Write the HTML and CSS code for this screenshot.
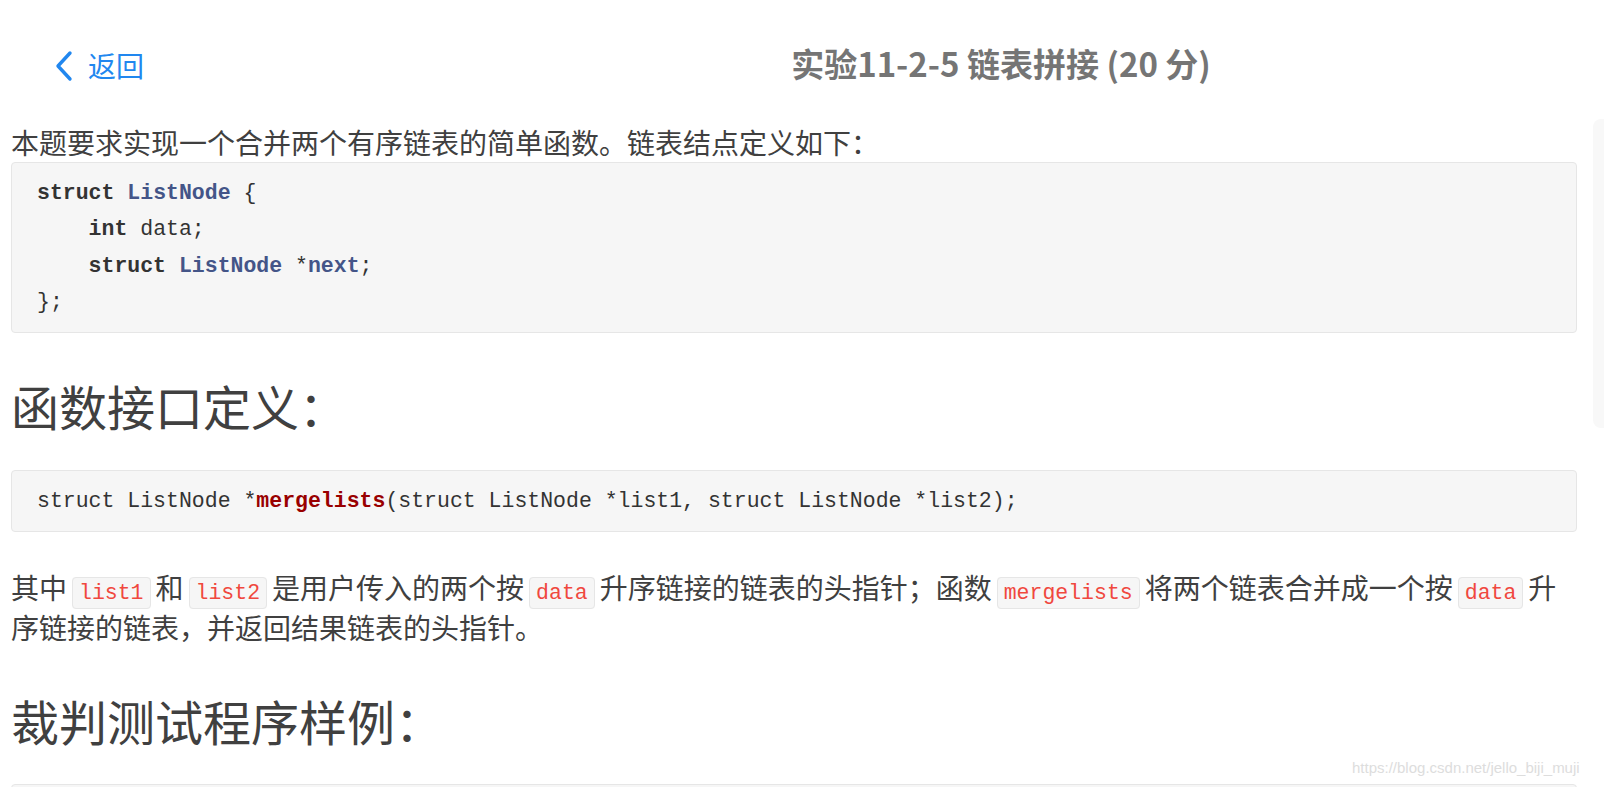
FILE: index.html
```html
<!DOCTYPE html>
<html lang="zh-CN">
<head>
<meta charset="utf-8">
<title>实验11-2-5 链表拼接 (20 分)</title>
<link rel="stylesheet" href="styles.css">
</head>
<body>
<header class="topbar">
  <a class="back" href="#">
    <svg class="chev" width="20" height="32" viewBox="0 0 20 32" aria-hidden="true">
      <polyline points="16,3 4,16 16,29" fill="none" stroke="#2187ef" stroke-width="3.4" stroke-linecap="round" stroke-linejoin="round"/>
    </svg>
    <span>返回</span>
  </a>
  <h1 class="title">实验11-2-5 链表拼接 (20 分)</h1>
</header>

<main class="content">
  <p class="lead">本题要求实现一个合并两个有序链表的简单函数。链表结点定义如下：</p>
  <pre class="code"><code><span class="kw">struct</span> <span class="ty">ListNode</span> {
    <span class="kw">int</span> data;
    <span class="kw">struct</span> <span class="ty">ListNode</span> *<span class="ty">next</span>;
};</code></pre>

  <h2 class="sec sec-first">函数接口定义：</h2>
  <pre class="code"><code>struct ListNode *<span class="fn">mergelists</span>(struct ListNode *list1, struct ListNode *list2);</code></pre>

  <p class="text">其中<code class="ic">list1</code>和<code class="ic">list2</code>是用户传入的两个按<code class="ic">data</code>升序链接的链表的头指针；函数<code class="ic">mergelists</code>将两个链表合并成一个按<code class="ic">data</code>升序链接的链表，并返回结果链表的头指针。</p>

  <h2 class="sec sec-second">裁判测试程序样例：</h2>
  <pre class="code code-cut"><code>#include &lt;stdio.h&gt;</code></pre>
</main>

<div class="scroll-thumb"></div>
<div class="watermark">https://blog.csdn.net/jello_biji_muji</div>
</body>
</html>
```

FILE: styles.css
```css
html, body {
  margin: 0;
  padding: 0;
  background: #ffffff;
  height: 787px;
  overflow: hidden;
}

body {
  font-family: "Noto Sans CJK SC", "Noto Sans", sans-serif;
  color: #404040;
  position: relative;
}

.topbar {
  display: flex;
  align-items: center;
  height: 58px;
  padding-top: 36px;
}

.back {
  display: flex;
  align-items: center;
  width: 344px;
  padding-left: 54px;
  color: #2187ef;
  text-decoration: none;
  font-size: 28px;
  line-height: 32px;
}

.back .chev {
  margin-right: 14px;
  margin-top: 1px;
}

.title {
  flex: 1;
  margin: 0 0 4px 0;
  text-align: center;
  font-size: 33px;
  font-weight: 700;
  color: #757575;
  line-height: 40px;
}

.content {
  padding: 0 27px 0 11px;
}

.lead {
  margin: 28px 0 0 0;
  font-size: 28px;
  line-height: 40px;
}

.code {
  margin: 0;
  background: #f6f6f6;
  border: 1px solid #e6e6e6;
  border-radius: 4px;
  padding: 12px 25px;
  font-family: "Liberation Mono", monospace;
  font-size: 21.5px;
  line-height: 36.3px;
  color: #333333;
}

.code code {
  font-family: inherit;
  font-size: inherit;
  line-height: inherit;
}

.code .kw {
  font-weight: 700;
  color: #333333;
}

.code .ty {
  font-weight: 700;
  color: #445588;
}

.code .fn {
  font-weight: 700;
  color: #990000;
}

.sec {
  margin: 0;
  font-size: 48px;
  font-weight: 400;
  line-height: 58px;
  color: #404040;
}

.sec-first {
  margin-top: 43px;
  margin-bottom: 36px;
}

.sec-second {
  margin-top: 44px;
  margin-bottom: 35px;
}

.text {
  margin: 35px 0 0 0;
  font-size: 28px;
  line-height: 40px;
}

.ic {
  font-family: "Liberation Mono", monospace;
  font-size: 21.5px;
  line-height: 1;
  color: #f0483e;
  background: #f6f6f6;
  border: 1px solid #e6e6e6;
  border-radius: 4px;
  padding: 3px 6px;
  margin: 0 5px;
}

.code-cut {
  height: 40px;
}

.scroll-thumb {
  position: absolute;
  left: 1593px;
  top: 119px;
  width: 20px;
  height: 309px;
  border-radius: 8px;
  background: #f8f8f8;
}

.watermark {
  position: absolute;
  left: 1352px;
  top: 759px;
  font-family: "Liberation Sans", Arial, sans-serif;
  font-size: 15px;
  color: #dddddd;
  line-height: 18px;
}
```
